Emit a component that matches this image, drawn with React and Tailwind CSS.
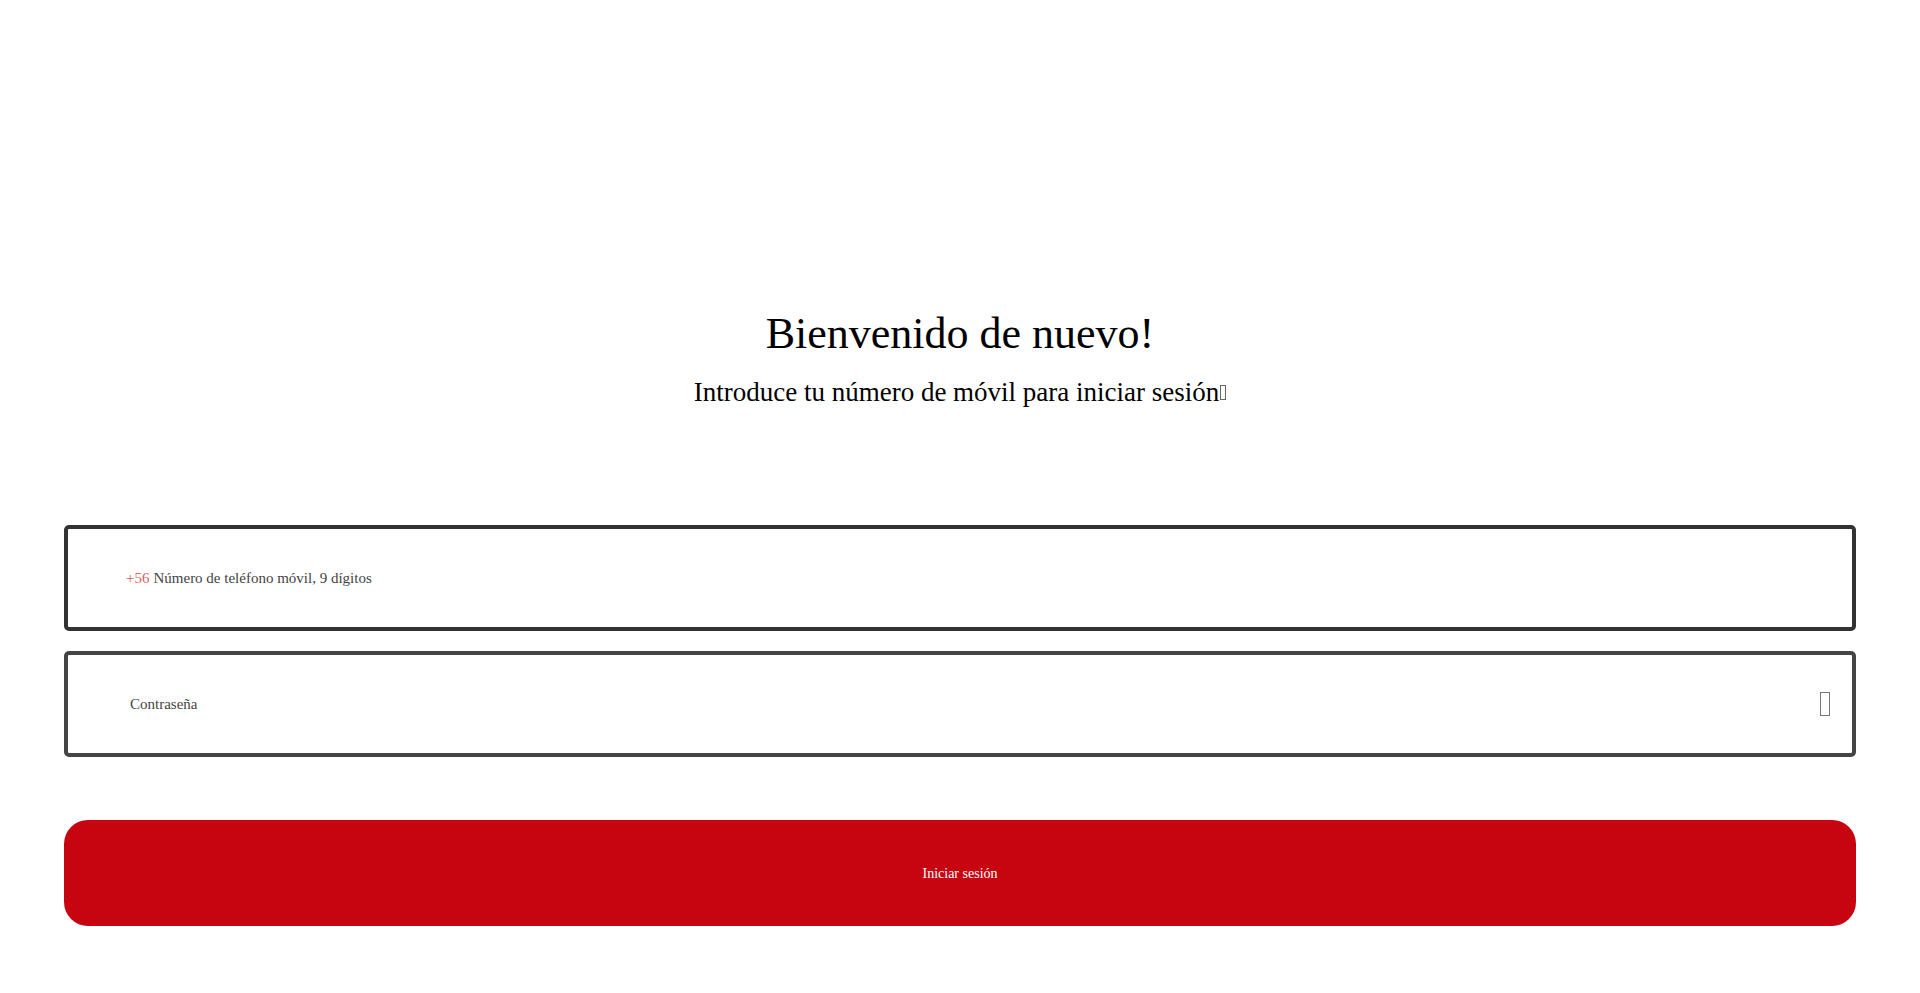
import React from "react";

export default function App() {
  return (
    <div className="min-h-[993px] w-full bg-white px-[64px] pt-[312px] font-['Liberation_Serif',serif] text-black">
      <div className="flex flex-col items-center">
        <h1 className="text-[44px] leading-none font-normal">Bienvenido de nuevo!</h1>
        <p className="mt-[23px] text-[27px] leading-none flex items-center">
          Introduce tu número de móvil para iniciar sesión
          <span className="ml-[1px] inline-block h-[15px] w-[6px] border border-[#666]"></span>
        </p>
      </div>

      <div className="mt-[119px] flex flex-col gap-[20px]">
        <div className="flex h-[106px] items-center rounded-[5px] border-[4px] border-[#333] pl-[58px] text-[15px]">
          <span className="text-[#e06060]">+56</span>
          <span className="ml-[4px] text-[#444]">Número de teléfono móvil, 9 dígitos</span>
        </div>
        <div className="flex h-[106px] items-center justify-between rounded-[5px] border-[4px] border-[#444] pl-[62px] pr-[22px] text-[15px]">
          <span className="text-[#444]">Contraseña</span>
          <span className="inline-block h-[24px] w-[10px] border border-[#777]"></span>
        </div>
      </div>

      <button className="mt-[63px] flex h-[106px] w-full items-center justify-center rounded-[24px] bg-[#c70511] text-[14px] text-white">
        Iniciar sesión
      </button>
    </div>
  );
}
